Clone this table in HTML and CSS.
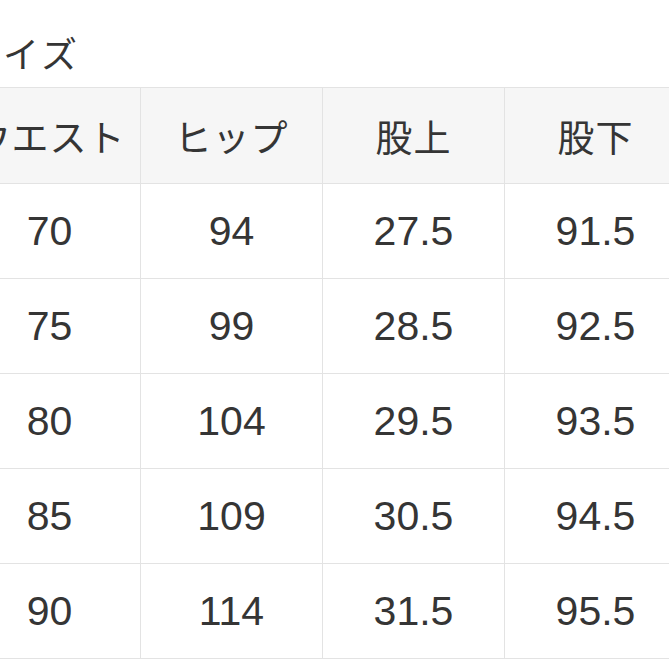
FILE: index.html
```html
<!DOCTYPE html>
<html lang="ja">
<head>
<meta charset="utf-8">
<link rel="stylesheet" href="styles.css">
</head>
<body>
<div class="page">
  <h2 class="title">サイズ</h2>
  <table class="size-table">
    <thead>
      <tr><th>ウエスト</th><th>ヒップ</th><th>股上</th><th>股下</th></tr>
    </thead>
    <tbody>
      <tr><td>70</td><td>94</td><td>27.5</td><td>91.5</td></tr>
      <tr><td>75</td><td>99</td><td>28.5</td><td>92.5</td></tr>
      <tr><td>80</td><td>104</td><td>29.5</td><td>93.5</td></tr>
      <tr><td>85</td><td>109</td><td>30.5</td><td>94.5</td></tr>
      <tr><td>90</td><td>114</td><td>31.5</td><td>95.5</td></tr>
    </tbody>
  </table>
</div>
</body>
</html>
```
FILE: styles.css
```css
html, body {
  margin: 0;
  padding: 0;
  background: #ffffff;
  overflow: hidden;
}
.page {
  width: 800px;
  margin-left: -42px;
  font-family: "Liberation Sans", "Noto Sans CJK JP", sans-serif;
  color: #353535;
}
.title {
  margin: 0;
  padding: 30px 0 0 0;
  height: 57px;
  font-size: 36px;
  font-weight: normal;
  line-height: 44px;
  font-family: "Noto Sans CJK JP", sans-serif;
  text-indent: 6px;
  letter-spacing: 3px;
}
.size-table {
  border-collapse: collapse;
  table-layout: fixed;
  width: 724px;
}
.size-table th,
.size-table td {
  width: 181px;
  border: 1px solid #e3e3e3;
  text-align: center;
  padding: 0;
}
.size-table th {
  height: 95px;
  background: #f6f6f6;
  font-family: "Noto Sans CJK JP", sans-serif;
  font-weight: normal;
  font-size: 37px;
  letter-spacing: 1px;
}
.size-table td {
  height: 94px;
  font-size: 41px;
}
```
